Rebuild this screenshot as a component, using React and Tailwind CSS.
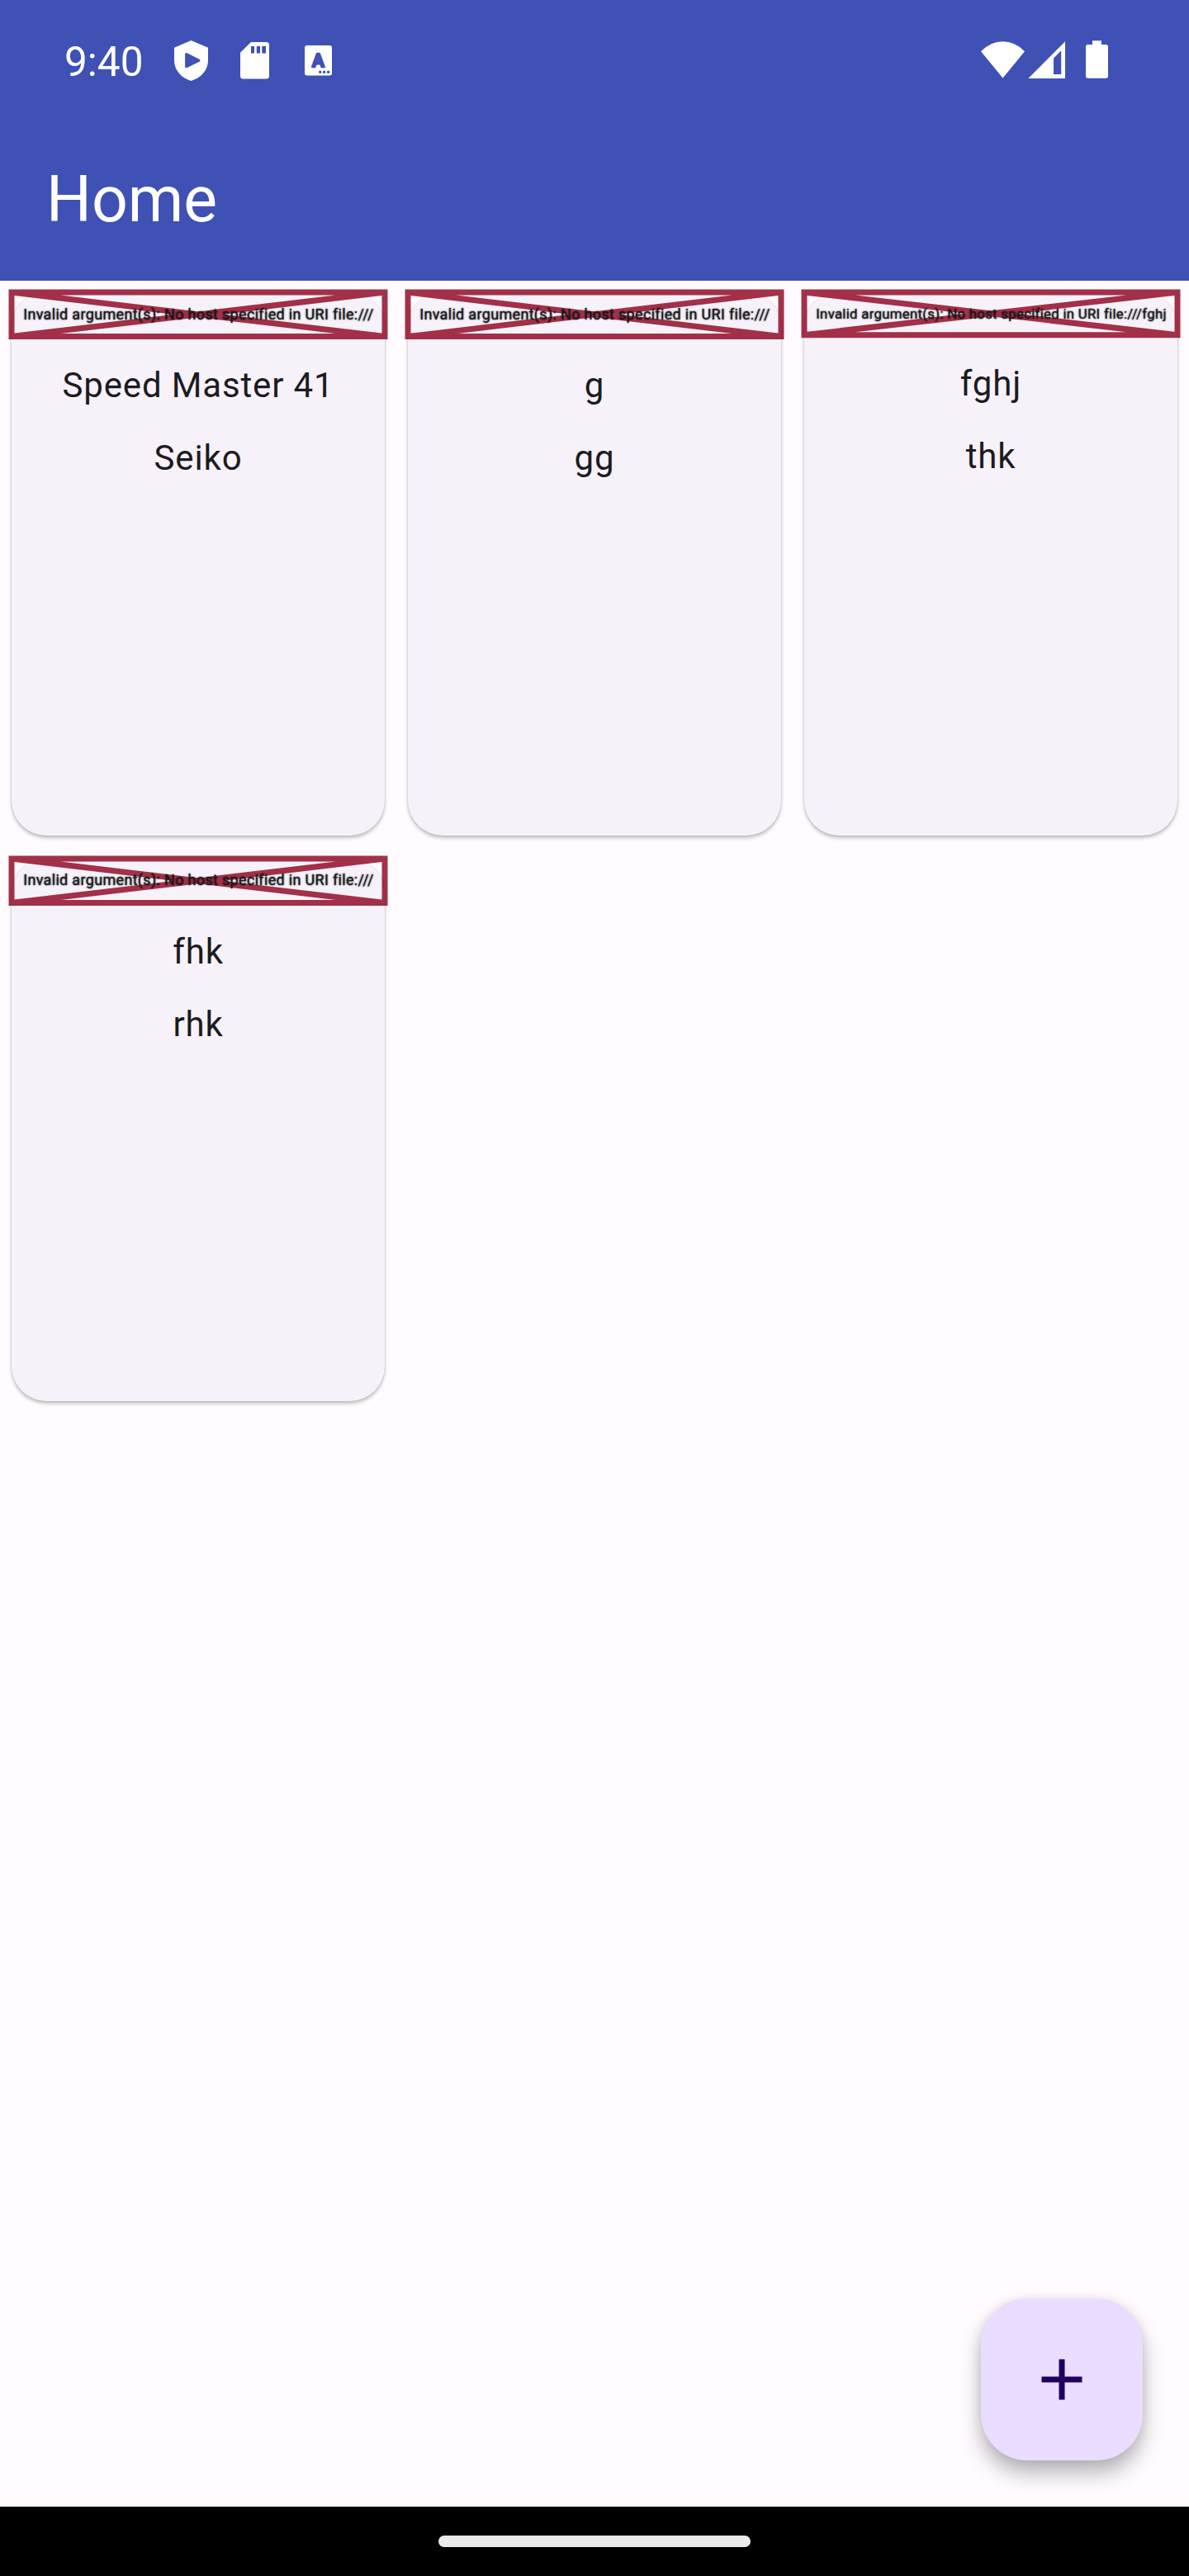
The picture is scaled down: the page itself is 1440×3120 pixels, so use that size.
const cards = [
  { title: "Speed Master 41", brand: "Seiko", error: "Invalid argument(s): No host specified in URI file:///" },
  { title: "g", brand: "gg", error: "Invalid argument(s): No host specified in URI file:///" },
  { title: "fghj", brand: "thk", error: "Invalid argument(s): No host specified in URI file:///fghj", long: true },
  { title: "fhk", brand: "rhk", error: "Invalid argument(s): No host specified in URI file:///" },
];

// Crossed-out frame shown in place of a picture that failed to load.
function ImageError({ message, long }) {
  const h = long ? 51.7 : 53.6;
  return (
    <div
      className={
        long
          ? "relative flex h-[51.7px] items-center justify-center"
          : "relative flex h-[53.6px] items-center justify-center"
      }
    >
      <svg className="absolute inset-0 overflow-visible" width="452" height={h} fill="none">
        <path
          d={`M0 0H452V${h}H0ZM452 0L0 ${h}M0 0L452 ${h}`}
          stroke="#8d021f"
          strokeOpacity="0.81"
          strokeWidth="7"
        />
      </svg>
      <span
        className={
          long
            ? "relative whitespace-nowrap pl-px text-[16.8px] leading-6 tracking-[0.017em] [text-shadow:0_0_2px_#000]"
            : "relative whitespace-nowrap pl-px text-[18px] leading-6 tracking-[0.018em] [text-shadow:0_0_2px_#000]"
        }
      >
        {message}
      </span>
    </div>
  );
}

function WatchCard({ item }) {
  return (
    <article className="m-3.5 flex flex-col rounded-[42px] bg-[#f7f2fa] shadow-[0_3px_4px_rgba(0,0,0,0.24),0_0_2px_rgba(0,0,0,0.16)]">
      <ImageError message={item.error} long={item.long} />
      <div className="flex flex-col gap-7 pt-[29.4px] text-center text-[42px] leading-[60px] tracking-[0.85px]">
        <p>{item.title}</p>
        <p>{item.brand}</p>
      </div>
    </article>
  );
}

function NotificationIcons() {
  return (
    <>
      <svg width="41" height="49" viewBox="211 49 41 49">
        <path d="M231.4 49L252 57.8V73C252 85 243.5 94.3 231.4 98C219.5 94.3 211 85 211 73V57.8Z" fill="#fff" />
        <path d="M225.8 65.8V80.5L240.7 73.2Z" fill="#3f51b5" stroke="#3f51b5" strokeWidth="3.4" strokeLinejoin="round" />
      </svg>
      <svg className="ml-[39px]" width="35" height="45" viewBox="291 51 35 45">
        <path d="M304 51H322.5Q326 51 326 54.5V92Q326 95.5 322.5 95.5H294.5Q291 95.5 291 92V63.7Z" fill="#fff" />
        <path d="M304 56h4v8.500h-4zM310.8 56h4.200v8.500h-4.200zM317.3 56h4.700v8.500h-4.700z" fill="#3f51b5" />
      </svg>
      <svg className="ml-[43px]" width="33" height="37" viewBox="369 55 33 37">
        <rect x="369" y="55" width="33" height="36.5" rx="3" fill="#fff" />
        <text
          x="385.4"
          y="81"
          textAnchor="middle"
          fontSize="22"
          fontWeight="500"
          fill="#3f51b5"
          stroke="#3f51b5"
          strokeWidth="2.6"
          strokeLinejoin="round"
        >
          A
        </text>
        <g fill="#3f51b5">
          <circle cx="387.7" cy="87.3" r="1.7" />
          <circle cx="392.6" cy="87.3" r="1.7" />
          <circle cx="397.6" cy="87.3" r="1.7" />
        </g>
      </svg>
    </>
  );
}

function SystemIcons() {
  return (
    <div className="flex items-center">
      <svg width="53" height="45" viewBox="1188 50 53 45">
        <path d="M1188 62.2Q1199.5 50.2 1214.5 50.2T1241 62.2L1214.5 94.5Z" fill="#fff" />
      </svg>
      <svg className="ml-1" width="45" height="45" viewBox="1245 50 45 45">
        <path fillRule="evenodd" d="M1245.3 95L1290 50.3V95ZM1276 70.5V90H1285.2V61.3Z" fill="#fff" />
      </svg>
      <svg className="ml-[25px]" width="27" height="46" viewBox="1315 49 27 46">
        <path
          d="M1323 49.2H1334V54H1339.5Q1342 54 1342 56.5V92Q1342 94.7 1339.5 94.7H1317.5Q1315 94.7 1315 92V56.5Q1315 54 1317.5 54H1323Z"
          fill="#fff"
        />
      </svg>
    </div>
  );
}

export default function App() {
  return (
    <div className="flex h-[3120px] w-[1440px] flex-col bg-[#fffbff] font-[Roboto,sans-serif] text-[#1c1b1f]">
      <header className="h-[340px] bg-[#3f51b5] text-white">
        <div className="flex h-36 items-center justify-between pl-[78px] pr-[98px]">
          <div className="flex items-center pt-0.5">
            <span className="mt-1 w-[133px] text-[49.5px] leading-[58px]">9:40</span>
            <NotificationIcons />
          </div>
          <SystemIcons />
        </div>
        <h1 className="pl-14 text-[77px] font-normal leading-[196px]">Home</h1>
      </header>

      <main className="flex flex-1 flex-col justify-between">
        <div className="grid auto-rows-[685.7px] grid-cols-3">
          {cards.map((item) => (
            <WatchCard key={item.title} item={item} />
          ))}
        </div>
        <button
          aria-label="Add"
          className="mb-14 mr-14 flex h-[196px] w-[196px] items-center justify-center self-end rounded-[56px] bg-[#eaddff] shadow-[0_16px_26px_rgba(0,0,0,0.28),0_0_14px_rgba(0,0,0,0.08)]"
        >
          <svg width="84" height="84" viewBox="0 0 24 24" fill="#21005d">
            <path d="M19 13h-6v6h-2v-6H5v-2h6V5h2v6h6z" />
          </svg>
        </button>
      </main>

      <footer className="flex h-[84px] items-center justify-center bg-black">
        <div className="h-3.5 w-[378px] rounded-full bg-[#ebebeb]" />
      </footer>
    </div>
  );
}
